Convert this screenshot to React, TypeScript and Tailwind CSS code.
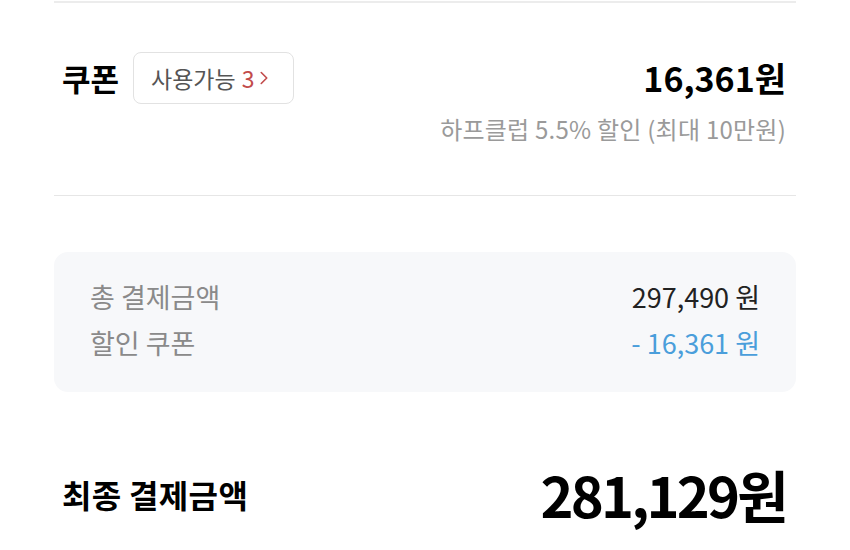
import { ChevronRight } from "lucide-react";

const font = { fontFamily: '"Noto Sans CJK KR", "Noto Sans", sans-serif' };

function App() {
   return (
      <div className="w-[850px] h-[550px] bg-white overflow-hidden" style={font}>
         <div className="px-[54px]">
            <div className="h-[2px] mt-[1px] bg-[#ececec]" />

            {/* coupon */}
            <div className="flex justify-between pt-[49px] pb-[51px] border-b border-[#e6e6e6]">
               <div className="flex items-start">
                  <h2 className="text-[31px] font-bold text-black leading-[52px] ml-[8px]">쿠폰</h2>
                  <button className="ml-[14px] h-[52px] w-[161px] rounded-[8px] border border-[#e2e2e2] flex items-center pl-[17px] text-[23px] text-[#555]">
                     사용가능
                     <span className="ml-[6px] text-[#c24b4b]">3</span>
                     <ChevronRight className="text-[#c24b4b] -ml-[1px]" size={22} strokeWidth={1.75} />
                  </button>
               </div>
               <div className="flex flex-col items-end pr-[10px]">
                  <div className="text-[34px] font-bold text-black leading-[52px]">16,361원</div>
                  <div className="text-[24px] text-[#9a9a9a] mt-[10px] leading-[30px] tracking-[0.01em]">하프클럽 5.5% 할인 (최대 10만원)</div>
               </div>
            </div>

            {/* summary box */}
            <div className="mt-[56px] rounded-[14px] bg-[#f7f8fa] px-[36px] pt-[22px] pb-[26px]">
               <div className="flex justify-between items-center text-[27px] leading-[46px]">
                  <span className="text-[#8a8a8a]">총 결제금액</span>
                  <span className="text-[#222]">297,490 원</span>
               </div>
               <div className="flex justify-between items-center text-[27px] leading-[46px]">
                  <span className="text-[#8a8a8a]">할인 쿠폰</span>
                  <span className="text-[#4a9edb]">- 16,361 원</span>
               </div>
            </div>

            {/* final */}
            <div className="flex justify-between items-center mt-[70px] pl-[8px] pr-[10px] leading-[64px]">
               <span className="text-[32px] font-bold text-black tracking-[0.01em]">최종 결제금액</span>
               <span className="text-[56px] font-bold text-black tracking-tighter">281,129원</span>
            </div>
         </div>
      </div>
   );
}

export default App;
